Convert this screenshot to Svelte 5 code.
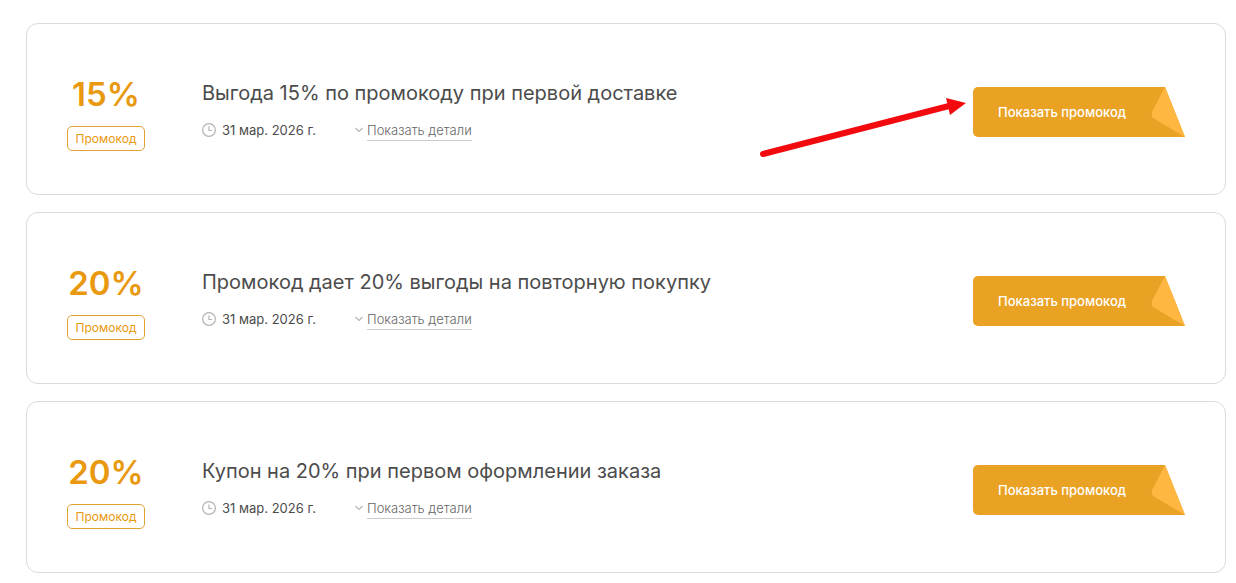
<script>
  // Coupons of the shop
  const coupons = [
    {
      value: "15%",
      title: "Выгода 15% по промокоду при первой доставке",
      date: "31 мар. 2026 г.",
      marked: true,
    },
    {
      value: "20%",
      title: "Промокод дает 20% выгоды на повторную покупку",
      date: "31 мар. 2026 г.",
      marked: false,
    },
    {
      value: "20%",
      title: "Купон на 20% при первом оформлении заказа",
      date: "31 мар. 2026 г.",
      marked: false,
    },
  ];
</script>

<main>
  {#each coupons as coupon}
    <article>
      <div class="discount">
        <div class="value">{coupon.value}</div>
        <div class="badge">Промокод</div>
      </div>

      <div class="info">
        <h2>{coupon.title}</h2>
        <div class="meta">
          <span class="date">
            <svg width="14" height="14" viewBox="0 0 14 14" fill="none" stroke="#b4b4b4">
              <circle cx="7" cy="7" r="6.4" stroke-width="1.2" />
              <path d="M7 3.5V7.5H10" stroke-width="1.2" />
            </svg>
            {coupon.date}
          </span>
          <a class="details" href="#details">
            <svg width="8" height="6" viewBox="0 0 8 6" fill="none" stroke="#b4b4b4">
              <path d="M0.5 1L4 4.5L7.5 1" stroke-width="1.1" />
            </svg>
            <span>Показать детали</span>
          </a>
        </div>
      </div>

      <div class="action">
        <button type="button">
          <span>Показать промокод</span>
          <svg class="corner" width="35" height="50" viewBox="0 0 35 50">
            <path d="M0 0H15L35 50H0Z" fill="#eaa224" />
            <path d="M15 0L35 50L3 31Q1 29 2 25Z" fill="#ffb742" />
          </svg>
        </button>

        <!-- Red pointer next to the button -->
        {#if coupon.marked}
          <svg class="pointer" width="210" height="62" viewBox="0 0 210 62">
            <path d="M6 57L192 9" stroke="#f20a0f" stroke-width="6" stroke-linecap="round" />
            <path d="M189 1L209 6L193 18Z" fill="#f20a0f" />
          </svg>
        {/if}
      </div>
    </article>
  {/each}
</main>

<style>
  :global(body) {
    background-color: white;
    font-family: Inter, "Liberation Sans", sans-serif;
  }

  main {
    display: grid;
    gap: 17px;
    padding: 23px 10px 10px 26px;
  }

  article {
    display: flex;
    align-items: center;
    box-sizing: border-box;
    min-height: 172px;
    padding: 28px 40px 22px;
    border: 1px solid #dadada;
    border-radius: 12px;
  }

  .discount {
    display: flex;
    flex-direction: column;
    align-items: center;
    flex: none;
    width: 78px;
    margin-right: 57px;
    color: #e8990f;
  }

  .value {
    margin-bottom: 12px;
    font-size: 33px;
    line-height: 40px;
    font-weight: 600;
  }

  .badge {
    box-sizing: border-box;
    width: 100%;
    height: 25px;
    border: 1px solid #e0a232;
    border-radius: 5px;
    font-size: 12px;
    line-height: 23px;
    text-align: center;
  }

  .info {
    flex: 1;
    margin-bottom: 4px;
  }

  h2 {
    margin: 0 0 14px;
    color: #4c4c4c;
    font-size: 20px;
    line-height: 26px;
    font-weight: 400;
  }

  .meta {
    display: flex;
    align-items: center;
    gap: 39px;
    font-size: 13px;
    line-height: 20px;
  }

  .date,
  .details {
    display: flex;
    align-items: center;
  }

  .date {
    gap: 6px;
    color: #4c4c4c;
  }

  .details {
    gap: 4px;
    color: #666;
    font-weight: 300;
    text-decoration: none;
  }

  .details span {
    border-bottom: 1px solid #ccc;
  }

  .action {
    position: relative;
    flex: none;
  }

  button {
    display: flex;
    align-items: center;
    height: 50px;
    padding: 0;
    border: none;
    background: none;
    color: white;
    font-family: inherit;
    font-size: 13px;
    font-weight: 500;
    cursor: pointer;
  }

  button span {
    box-sizing: border-box;
    min-width: 177px;
    padding-left: 25px;
    border-radius: 5px 0 0 5px;
    background-color: #eaa224;
    line-height: 50px;
    text-align: left;
  }

  .corner {
    display: block;
  }

  .pointer {
    position: absolute;
    top: 10px;
    right: 218px;
    pointer-events: none;
  }
</style>
